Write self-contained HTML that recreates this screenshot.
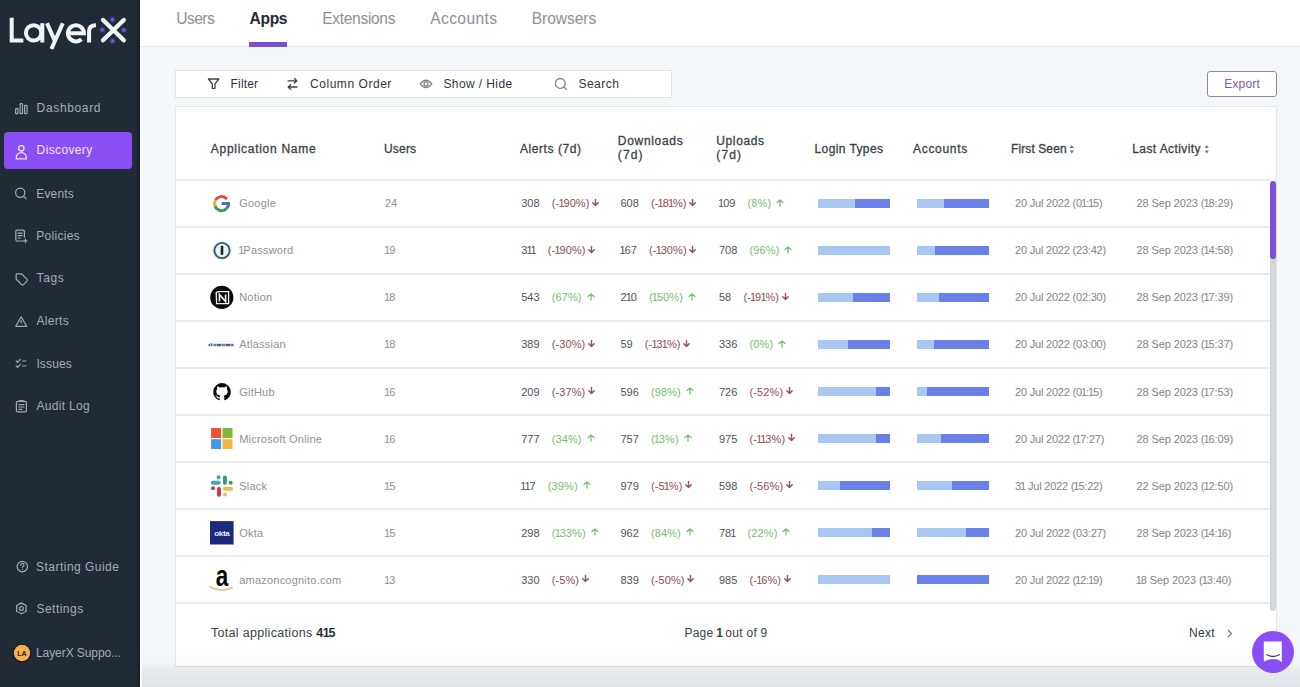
<!DOCTYPE html><html><head><meta charset="utf-8"><style>
*{box-sizing:border-box;margin:0;padding:0}
html,body{width:1300px;height:687px;overflow:hidden;background:#f4f7fa;font-family:"Liberation Sans",sans-serif}
.a{position:absolute;white-space:nowrap;line-height:1}
.ico{position:absolute}
#side{position:absolute;left:0;top:0;width:140px;height:687px;background:#202b35}
#hdr{position:absolute;left:140px;top:0;width:1160px;height:47px;background:#fff;border-bottom:1px solid #e6e9ec}
#tb{position:absolute;left:175px;top:70px;width:497px;height:28px;background:#fff;border:1px solid #e0e4e8}
#exp{position:absolute;left:1207px;top:71px;width:70px;height:26px;border:1.4px solid #8f8698;border-radius:3px;background:#fff}
#card{position:absolute;left:175px;top:106px;width:1102px;height:561px;background:#fff;border:1px solid #e2e5e9}
.rb{position:absolute;left:176px;width:1094px;height:2px;background:#eaecee}
.bar{position:absolute;height:9px;width:72px;background:#6b7fe9}
.bar i{position:absolute;left:0;top:0;height:9px;background:#a9c7f0}
</style></head><body><div id="side"></div>
<div class="a" style="left:137px;top:0;width:3px;height:687px;background:#1a232b"></div>
<div class="a" style="left:4px;top:132px;width:128px;height:37px;background:#8a4ff4;border-radius:4px;box-shadow:0.5px 1px 0 #2c2658"></div>
<div class="a" style="left:140px;top:0;width:2px;height:687px;background:#fafcfe"></div>
<svg class="ico" style="left:0;top:0" width="140" height="60" viewBox="0 0 140 60">
<defs><radialGradient id="dg"><stop offset="0" stop-color="#7a6ad8"/><stop offset="0.55" stop-color="#4f44a8"/><stop offset="1" stop-color="#2a2f5a" stop-opacity="0"/></radialGradient></defs>
<g fill="url(#dg)"><circle cx="112.5" cy="19.6" r="3.6"/><circle cx="102.3" cy="30" r="3.6"/><circle cx="123.8" cy="30" r="3.6"/><circle cx="112.5" cy="41" r="3.6"/></g>
<g fill="none" stroke="#f2f4f7" stroke-width="4" stroke-linecap="butt">
<path d="M11.7 17.8 V40.5 H23.4"/>
<circle cx="33.6" cy="32.85" r="7.7"/>
<path d="M42.3 23.2 V42.5"/>
<path d="M47 23.2 L55.2 41.6 M62.8 23.2 L51.4 49"/>
<path d="M67.8 33.2 H83.9 A8 8 0 1 0 81.4 39.2"/>
<path d="M89.1 42.5 V31.5 Q89.1 25.2 96 25.2"/>
</g>
<g stroke="#f2f4f7" stroke-width="4.4" stroke-linecap="round"><path d="M103 20 L123.8 40.3 M123.8 20 L103 40.3"/></g>
</svg>

<svg class="ico" style="left:0;top:0" width="140" height="687" viewBox="0 0 140 687">
<g fill="none" stroke="#a3aab2" stroke-width="1.2" stroke-linecap="round" stroke-linejoin="round">
<rect x="15.6" y="108.6" width="2.4" height="5" rx="0.6"/>
<rect x="20.1" y="103.6" width="2.4" height="10" rx="0.6"/>
<rect x="24.6" y="105.4" width="2.4" height="8.2" rx="0.6"/>
<circle cx="20.2" cy="192.8" r="4.6"/><path d="M23.6 196.2 L26.2 198.8"/>
<path d="M22.8 241 H17.2 a1.4 1.4 0 0 1 -1.4 -1.4 V231.6 a1.4 1.4 0 0 1 1.4 -1.4 H23 a1.4 1.4 0 0 1 1.4 1.4 V237.2"/>
<path d="M18 233.2 H22.2 M18 235.6 H22.2 M18 238 H20.4 M25.4 239.2 V242.6 M23.7 240.9 H27.1"/>
<path d="M16.2 274.6 L16.2 279.3 L21.8 284.8 Q22.5 285.4 23.2 284.8 L27.2 280.8 Q27.8 280.1 27.2 279.4 L21.6 273.8 L17 273.8 Q16.2 273.8 16.2 274.6 Z"/>
<path d="M21.2 316.8 L26.6 326.3 H15.8 Z"/><path d="M21.2 320.6 V323"/>
<path d="M16.2 361 L17.6 362.4 L20.3 359.4 M16.2 366 L17.6 367.4 L20.3 364.4 M22.6 361 H26 M22.6 366 H26"/>
<rect x="16.4" y="401.4" width="10" height="10.4" rx="1.2"/><path d="M19.6 400.6 H23.2 M18.8 404.6 H24 M18.8 407 H24 M18.8 409.4 H22"/>
<circle cx="22.3" cy="566.6" r="5.2"/><path d="M20.6 565.2 Q20.8 563.3 22.4 563.4 Q24.1 563.6 23.9 565.1 Q23.6 566.2 22.4 566.8 V567.6"/><path d="M22.4 569.6 V569.7"/>
<path d="M21.4 602.9 Q22.4 603.4 26.2 605.6 Q25.8 608.4 26.2 611.2 Q23 612.6 21.4 613.9 Q19.8 612.6 16.6 611.2 Q17 608.4 16.6 605.6 Q20.4 603.4 21.4 602.9 Z"/><circle cx="21.4" cy="608.4" r="1.9"/>
</g>
<g fill="none" stroke="#f3ddff" stroke-width="1.3"><circle cx="21.3" cy="148.3" r="2.7"/><path d="M16.3 158.8 Q16.2 152.6 21.3 152.6 Q26.4 152.6 26.3 158.8 Z"/></g>
<circle cx="22" cy="653" r="9.6" fill="#15110d" opacity="0.6"/><circle cx="22" cy="653" r="8.2" fill="#f2ae58"/>
<text x="22" y="655.6" font-size="7" font-weight="bold" font-family="Liberation Sans" fill="#3a2408" text-anchor="middle">LA</text>
</svg>
<div class="a" style="left:36.6px;top:101.64px;font-size:12px;letter-spacing:0.653px;color:#a6adb4">Dashboard</div>
<div class="a" style="left:36.6px;top:144.44px;font-size:12px;letter-spacing:0.368px;color:#f6e3ff">Discovery</div>
<div class="a" style="left:36.3px;top:187.64px;font-size:12px;letter-spacing:0.152px;color:#a6adb4">Events</div>
<div class="a" style="left:36.3px;top:230.04px;font-size:12px;letter-spacing:0.280px;color:#a6adb4">Policies</div>
<div class="a" style="left:36.5px;top:271.94px;font-size:12px;letter-spacing:0.635px;color:#a6adb4">Tags</div>
<div class="a" style="left:36.4px;top:315.24px;font-size:12px;letter-spacing:0.335px;color:#a6adb4">Alerts</div>
<div class="a" style="left:36.4px;top:357.64px;font-size:12px;letter-spacing:0.135px;color:#a6adb4">Issues</div>
<div class="a" style="left:36.4px;top:400.04px;font-size:12px;letter-spacing:0.309px;color:#a6adb4">Audit Log</div>
<div class="a" style="left:36.1px;top:560.54px;font-size:12px;letter-spacing:0.463px;color:#a6adb4">Starting Guide</div>
<div class="a" style="left:36.5px;top:603.24px;font-size:12px;letter-spacing:0.468px;color:#a6adb4">Settings</div>
<div class="a" style="left:36px;top:647.34px;font-size:12px;letter-spacing:-0.077px;color:#a6adb4">LayerX Suppo...</div>
<div id="hdr"></div>
<div class="a" style="left:176.2px;top:10.59px;font-size:15.6px;letter-spacing:-0.547px;color:#8b9096">Users</div>
<div class="a" style="left:249.6px;top:10.59px;font-size:15.6px;letter-spacing:-0.371px;font-weight:bold;color:#262b31">Apps</div>
<div class="a" style="left:322.2px;top:10.59px;font-size:15.6px;letter-spacing:-0.328px;color:#8b9096">Extensions</div>
<div class="a" style="left:430.3px;top:10.59px;font-size:15.6px;letter-spacing:0.355px;color:#8b9096">Accounts</div>
<div class="a" style="left:531.8px;top:10.59px;font-size:15.6px;letter-spacing:-0.087px;color:#8b9096">Browsers</div>
<div class="a" style="left:249px;top:42px;width:38px;height:5px;background:#7a4fd6"></div>
<div id="tb"></div>
<div class="a" style="left:230.6px;top:77.84px;font-size:12px;letter-spacing:0.171px;color:#30363c">Filter</div>
<div class="a" style="left:310px;top:77.84px;font-size:12px;letter-spacing:0.545px;color:#30363c">Column Order</div>
<div class="a" style="left:443.4px;top:77.84px;font-size:12px;letter-spacing:0.409px;color:#30363c">Show / Hide</div>
<div class="a" style="left:578.4px;top:77.84px;font-size:12px;letter-spacing:0.495px;color:#30363c">Search</div>
<svg class="ico" style="left:0;top:0" width="700" height="110" viewBox="0 0 700 110">
<g fill="none" stroke="#3d4248" stroke-width="1.3" stroke-linejoin="round" stroke-linecap="round">
<path d="M208.4 79 H218.8 L215 83.8 V88.3 L212.3 88.3 V83.8 Z"/>
<path d="M288 80.8 H296.4 M294.4 78.6 L296.8 80.8 L294.4 83 M297 87 H288.6 M290.6 84.8 L288.2 87 L290.6 89.2"/>
</g>
<g fill="none" stroke="#7f8388" stroke-width="1.3">
<path d="M420.2 83.9 Q426 76.6 431.8 83.9 Q426 91.2 420.2 83.9 Z"/><circle cx="426" cy="83.9" r="2"/>
<circle cx="560.3" cy="83.4" r="4.9"/><path d="M563.8 86.9 L566.4 89.3" stroke-linecap="round"/>
</g>
</svg>
<div id="exp"></div>
<div class="a" style="left:1224.3px;top:77.74px;font-size:12px;letter-spacing:0.152px;color:#7a5cb0">Export</div>
<div id="card"></div>
<div class="a" style="left:210.8px;top:142.54px;font-size:12px;letter-spacing:0.715px;color:#3a3f45;-webkit-text-stroke:0.3px #3a3f45">Application Name</div>
<div class="a" style="left:384px;top:142.54px;font-size:12px;letter-spacing:0.191px;color:#3a3f45;-webkit-text-stroke:0.3px #3a3f45">Users</div>
<div class="a" style="left:520px;top:142.54px;font-size:12px;letter-spacing:0.558px;color:#3a3f45;-webkit-text-stroke:0.3px #3a3f45">Alerts (7d)</div>
<div class="a" style="left:814.5px;top:142.54px;font-size:12px;letter-spacing:0.400px;color:#3a3f45;-webkit-text-stroke:0.3px #3a3f45">Login Types</div>
<div class="a" style="left:913px;top:142.54px;font-size:12px;letter-spacing:0.693px;color:#3a3f45;-webkit-text-stroke:0.3px #3a3f45">Accounts</div>
<div class="a" style="left:1011px;top:142.54px;font-size:12px;letter-spacing:0.101px;color:#3a3f45;-webkit-text-stroke:0.3px #3a3f45">First Seen</div>
<div class="a" style="left:1132.3px;top:142.54px;font-size:12px;letter-spacing:0.403px;color:#3a3f45;-webkit-text-stroke:0.3px #3a3f45">Last Activity</div>
<div class="a" style="left:617.8px;top:135.44px;font-size:12px;letter-spacing:0.692px;color:#3a3f45;-webkit-text-stroke:0.3px #3a3f45">Downloads</div>
<div class="a" style="left:617.8px;top:149.34px;font-size:12px;letter-spacing:1.139px;color:#3a3f45;-webkit-text-stroke:0.3px #3a3f45">(7d)</div>
<div class="a" style="left:716.3px;top:135.44px;font-size:12px;letter-spacing:0.610px;color:#3a3f45;-webkit-text-stroke:0.3px #3a3f45">Uploads</div>
<div class="a" style="left:716.3px;top:149.34px;font-size:12px;letter-spacing:1.139px;color:#3a3f45;-webkit-text-stroke:0.3px #3a3f45">(7d)</div>
<div class="rb" style="top:179px"></div>
<div class="a" style="left:239.2px;top:198.39px;font-size:11px;letter-spacing:0.220px;color:#8c9196">Google</div>
<div class="a" style="left:385px;top:198.39px;font-size:11px;color:#8c9196">24</div>
<div id="cn0" class="a" style="left:521.2px;top:198.39px;font-size:11px;color:#4e5358">308</div><div class="a" style="left:551.76px;top:198.39px;font-size:11px;letter-spacing:0.1px;color:#914c51">(-<span style="margin-left:-0.9px;letter-spacing:-1.1px">1</span>90%)</div><svg width="7" height="9" viewBox="0 0 7 9" style="position:absolute;left:592.13px;top:198.10px"><path d="M3.5 1.4 V7.6 M0.8 4.8 L3.5 7.6 L6.2 4.8" fill="none" stroke="#94555a" stroke-width="1.45" stroke-linecap="round" stroke-linejoin="round"/></svg>
<div id="cn1" class="a" style="left:620.4px;top:198.39px;font-size:11px;color:#4e5358">608</div><div class="a" style="left:650.96px;top:198.39px;font-size:11px;letter-spacing:0.1px;color:#914c51">(-<span style="margin-left:-0.9px;letter-spacing:-1.1px">1</span>8<span style="margin-left:-0.9px;letter-spacing:-1.1px">1</span>%)</div><svg width="7" height="9" viewBox="0 0 7 9" style="position:absolute;left:689.25px;top:198.10px"><path d="M3.5 1.4 V7.6 M0.8 4.8 L3.5 7.6 L6.2 4.8" fill="none" stroke="#94555a" stroke-width="1.45" stroke-linecap="round" stroke-linejoin="round"/></svg>
<div id="cn2" class="a" style="left:719px;top:198.39px;font-size:11px;color:#4e5358"><span style="margin-left:-0.9px;letter-spacing:-1.1px">1</span>09</div><div class="a" style="left:747.59px;top:198.39px;font-size:11px;letter-spacing:0.1px;color:#76bd74">(8%)</div><svg width="8" height="8" viewBox="0 0 8 8" style="position:absolute;left:776.22px;top:199.10px"><path d="M4 7 V0.9 M1 3.6 L4 0.9 L7 3.6" fill="none" stroke="#7cbd7a" stroke-width="1.3" stroke-linecap="round" stroke-linejoin="round"/></svg>
<div class="bar" style="left:818px;top:199px"><i style="width:51%"></i></div>
<div class="bar" style="left:917px;top:199px"><i style="width:37%"></i></div>
<div class="a" style="left:1015px;top:198.39px;font-size:11px;letter-spacing:-0.200px;color:#80858a">20 Jul 2022 (0<span style="margin-left:-0.9px;letter-spacing:-1.1px">1</span>:<span style="margin-left:-0.9px;letter-spacing:-1.1px">1</span>5)</div>
<div class="a" style="left:1136.6px;top:198.39px;font-size:11px;letter-spacing:-0.100px;color:#80858a">28 Sep 2023 (<span style="margin-left:-0.9px;letter-spacing:-1.1px">1</span>8:29)</div>
<div class="rb" style="top:226px"></div>
<div class="a" style="left:239.2px;top:245.42px;font-size:11px;letter-spacing:0.220px;color:#8c9196"><span style="margin-left:-0.9px;letter-spacing:-1.1px">1</span>Password</div>
<div class="a" style="left:385px;top:245.42px;font-size:11px;color:#8c9196"><span style="margin-left:-0.9px;letter-spacing:-1.1px">1</span>9</div>
<div id="cn3" class="a" style="left:521.2px;top:245.42px;font-size:11px;color:#4e5358">3<span style="margin-left:-0.9px;letter-spacing:-1.1px">1</span><span style="margin-left:-0.9px;letter-spacing:-1.1px">1</span></div><div class="a" style="left:547.81px;top:245.42px;font-size:11px;letter-spacing:0.1px;color:#914c51">(-<span style="margin-left:-0.9px;letter-spacing:-1.1px">1</span>90%)</div><svg width="7" height="9" viewBox="0 0 7 9" style="position:absolute;left:588.17px;top:245.13px"><path d="M3.5 1.4 V7.6 M0.8 4.8 L3.5 7.6 L6.2 4.8" fill="none" stroke="#94555a" stroke-width="1.45" stroke-linecap="round" stroke-linejoin="round"/></svg>
<div id="cn4" class="a" style="left:620.4px;top:245.42px;font-size:11px;color:#4e5358"><span style="margin-left:-0.9px;letter-spacing:-1.1px">1</span>67</div><div class="a" style="left:648.99px;top:245.42px;font-size:11px;letter-spacing:0.1px;color:#914c51">(-<span style="margin-left:-0.9px;letter-spacing:-1.1px">1</span>30%)</div><svg width="7" height="9" viewBox="0 0 7 9" style="position:absolute;left:689.36px;top:245.13px"><path d="M3.5 1.4 V7.6 M0.8 4.8 L3.5 7.6 L6.2 4.8" fill="none" stroke="#94555a" stroke-width="1.45" stroke-linecap="round" stroke-linejoin="round"/></svg>
<div id="cn5" class="a" style="left:719px;top:245.42px;font-size:11px;color:#4e5358">708</div><div class="a" style="left:749.56px;top:245.42px;font-size:11px;letter-spacing:0.1px;color:#76bd74">(96%)</div><svg width="8" height="8" viewBox="0 0 8 8" style="position:absolute;left:784.40px;top:246.13px"><path d="M4 7 V0.9 M1 3.6 L4 0.9 L7 3.6" fill="none" stroke="#7cbd7a" stroke-width="1.3" stroke-linecap="round" stroke-linejoin="round"/></svg>
<div class="bar" style="left:818px;top:246px"><i style="width:100%"></i></div>
<div class="bar" style="left:917px;top:246px"><i style="width:25%"></i></div>
<div class="a" style="left:1015px;top:245.42px;font-size:11px;letter-spacing:-0.200px;color:#80858a">20 Jul 2022 (23:42)</div>
<div class="a" style="left:1136.6px;top:245.42px;font-size:11px;letter-spacing:-0.100px;color:#80858a">28 Sep 2023 (<span style="margin-left:-0.9px;letter-spacing:-1.1px">1</span>4:58)</div>
<div class="rb" style="top:273px"></div>
<div class="a" style="left:239.2px;top:292.45px;font-size:11px;letter-spacing:0.220px;color:#8c9196">Notion</div>
<div class="a" style="left:385px;top:292.45px;font-size:11px;color:#8c9196"><span style="margin-left:-0.9px;letter-spacing:-1.1px">1</span>8</div>
<div id="cn6" class="a" style="left:521.2px;top:292.45px;font-size:11px;color:#4e5358">543</div><div class="a" style="left:551.76px;top:292.45px;font-size:11px;letter-spacing:0.1px;color:#76bd74">(67%)</div><svg width="8" height="8" viewBox="0 0 8 8" style="position:absolute;left:586.60px;top:293.16px"><path d="M4 7 V0.9 M1 3.6 L4 0.9 L7 3.6" fill="none" stroke="#7cbd7a" stroke-width="1.3" stroke-linecap="round" stroke-linejoin="round"/></svg>
<div id="cn7" class="a" style="left:620.4px;top:292.45px;font-size:11px;color:#4e5358">2<span style="margin-left:-0.9px;letter-spacing:-1.1px">1</span>0</div><div class="a" style="left:648.99px;top:292.45px;font-size:11px;letter-spacing:0.1px;color:#76bd74">(<span style="margin-left:-0.9px;letter-spacing:-1.1px">1</span>50%)</div><svg width="8" height="8" viewBox="0 0 8 8" style="position:absolute;left:687.99px;top:293.16px"><path d="M4 7 V0.9 M1 3.6 L4 0.9 L7 3.6" fill="none" stroke="#7cbd7a" stroke-width="1.3" stroke-linecap="round" stroke-linejoin="round"/></svg>
<div id="cn8" class="a" style="left:719px;top:292.45px;font-size:11px;color:#4e5358">58</div><div class="a" style="left:743.45px;top:292.45px;font-size:11px;letter-spacing:0.1px;color:#914c51">(-<span style="margin-left:-0.9px;letter-spacing:-1.1px">1</span>9<span style="margin-left:-0.9px;letter-spacing:-1.1px">1</span>%)</div><svg width="7" height="9" viewBox="0 0 7 9" style="position:absolute;left:781.74px;top:292.16px"><path d="M3.5 1.4 V7.6 M0.8 4.8 L3.5 7.6 L6.2 4.8" fill="none" stroke="#94555a" stroke-width="1.45" stroke-linecap="round" stroke-linejoin="round"/></svg>
<div class="bar" style="left:818px;top:293px"><i style="width:49%"></i></div>
<div class="bar" style="left:917px;top:293px"><i style="width:30%"></i></div>
<div class="a" style="left:1015px;top:292.45px;font-size:11px;letter-spacing:-0.200px;color:#80858a">20 Jul 2022 (02:30)</div>
<div class="a" style="left:1136.6px;top:292.45px;font-size:11px;letter-spacing:-0.100px;color:#80858a">28 Sep 2023 (<span style="margin-left:-0.9px;letter-spacing:-1.1px">1</span>7:39)</div>
<div class="rb" style="top:320px"></div>
<div class="a" style="left:239.2px;top:339.48px;font-size:11px;letter-spacing:0.220px;color:#8c9196">Atlassian</div>
<div class="a" style="left:385px;top:339.48px;font-size:11px;color:#8c9196"><span style="margin-left:-0.9px;letter-spacing:-1.1px">1</span>8</div>
<div id="cn9" class="a" style="left:521.2px;top:339.48px;font-size:11px;color:#4e5358">389</div><div class="a" style="left:551.76px;top:339.48px;font-size:11px;letter-spacing:0.1px;color:#914c51">(-30%)</div><svg width="7" height="9" viewBox="0 0 7 9" style="position:absolute;left:587.97px;top:339.19px"><path d="M3.5 1.4 V7.6 M0.8 4.8 L3.5 7.6 L6.2 4.8" fill="none" stroke="#94555a" stroke-width="1.45" stroke-linecap="round" stroke-linejoin="round"/></svg>
<div id="cn10" class="a" style="left:620.4px;top:339.48px;font-size:11px;color:#4e5358">59</div><div class="a" style="left:644.85px;top:339.48px;font-size:11px;letter-spacing:0.1px;color:#914c51">(-<span style="margin-left:-0.9px;letter-spacing:-1.1px">1</span>3<span style="margin-left:-0.9px;letter-spacing:-1.1px">1</span>%)</div><svg width="7" height="9" viewBox="0 0 7 9" style="position:absolute;left:683.14px;top:339.19px"><path d="M3.5 1.4 V7.6 M0.8 4.8 L3.5 7.6 L6.2 4.8" fill="none" stroke="#94555a" stroke-width="1.45" stroke-linecap="round" stroke-linejoin="round"/></svg>
<div id="cn11" class="a" style="left:719px;top:339.48px;font-size:11px;color:#4e5358">336</div><div class="a" style="left:749.56px;top:339.48px;font-size:11px;letter-spacing:0.1px;color:#76bd74">(0%)</div><svg width="8" height="8" viewBox="0 0 8 8" style="position:absolute;left:778.18px;top:340.19px"><path d="M4 7 V0.9 M1 3.6 L4 0.9 L7 3.6" fill="none" stroke="#7cbd7a" stroke-width="1.3" stroke-linecap="round" stroke-linejoin="round"/></svg>
<div class="bar" style="left:818px;top:340px"><i style="width:42%"></i></div>
<div class="bar" style="left:917px;top:340px"><i style="width:24%"></i></div>
<div class="a" style="left:1015px;top:339.48px;font-size:11px;letter-spacing:-0.200px;color:#80858a">20 Jul 2022 (03:00)</div>
<div class="a" style="left:1136.6px;top:339.48px;font-size:11px;letter-spacing:-0.100px;color:#80858a">28 Sep 2023 (<span style="margin-left:-0.9px;letter-spacing:-1.1px">1</span>5:37)</div>
<div class="rb" style="top:367px"></div>
<div class="a" style="left:239.2px;top:386.51px;font-size:11px;letter-spacing:0.220px;color:#8c9196">GitHub</div>
<div class="a" style="left:385px;top:386.51px;font-size:11px;color:#8c9196"><span style="margin-left:-0.9px;letter-spacing:-1.1px">1</span>6</div>
<div id="cn12" class="a" style="left:521.2px;top:386.51px;font-size:11px;color:#4e5358">209</div><div class="a" style="left:551.76px;top:386.51px;font-size:11px;letter-spacing:0.1px;color:#914c51">(-37%)</div><svg width="7" height="9" viewBox="0 0 7 9" style="position:absolute;left:587.97px;top:386.22px"><path d="M3.5 1.4 V7.6 M0.8 4.8 L3.5 7.6 L6.2 4.8" fill="none" stroke="#94555a" stroke-width="1.45" stroke-linecap="round" stroke-linejoin="round"/></svg>
<div id="cn13" class="a" style="left:620.4px;top:386.51px;font-size:11px;color:#4e5358">596</div><div class="a" style="left:650.96px;top:386.51px;font-size:11px;letter-spacing:0.1px;color:#76bd74">(98%)</div><svg width="8" height="8" viewBox="0 0 8 8" style="position:absolute;left:685.80px;top:387.22px"><path d="M4 7 V0.9 M1 3.6 L4 0.9 L7 3.6" fill="none" stroke="#7cbd7a" stroke-width="1.3" stroke-linecap="round" stroke-linejoin="round"/></svg>
<div id="cn14" class="a" style="left:719px;top:386.51px;font-size:11px;color:#4e5358">726</div><div class="a" style="left:749.56px;top:386.51px;font-size:11px;letter-spacing:0.1px;color:#914c51">(-52%)</div><svg width="7" height="9" viewBox="0 0 7 9" style="position:absolute;left:785.77px;top:386.22px"><path d="M3.5 1.4 V7.6 M0.8 4.8 L3.5 7.6 L6.2 4.8" fill="none" stroke="#94555a" stroke-width="1.45" stroke-linecap="round" stroke-linejoin="round"/></svg>
<div class="bar" style="left:818px;top:387px"><i style="width:80%"></i></div>
<div class="bar" style="left:917px;top:387px"><i style="width:14%"></i></div>
<div class="a" style="left:1015px;top:386.51px;font-size:11px;letter-spacing:-0.200px;color:#80858a">20 Jul 2022 (0<span style="margin-left:-0.9px;letter-spacing:-1.1px">1</span>:<span style="margin-left:-0.9px;letter-spacing:-1.1px">1</span>5)</div>
<div class="a" style="left:1136.6px;top:386.51px;font-size:11px;letter-spacing:-0.100px;color:#80858a">28 Sep 2023 (<span style="margin-left:-0.9px;letter-spacing:-1.1px">1</span>7:53)</div>
<div class="rb" style="top:414px"></div>
<div class="a" style="left:239.2px;top:433.54px;font-size:11px;letter-spacing:0.220px;color:#8c9196">Microsoft Online</div>
<div class="a" style="left:385px;top:433.54px;font-size:11px;color:#8c9196"><span style="margin-left:-0.9px;letter-spacing:-1.1px">1</span>6</div>
<div id="cn15" class="a" style="left:521.2px;top:433.54px;font-size:11px;color:#4e5358">777</div><div class="a" style="left:551.76px;top:433.54px;font-size:11px;letter-spacing:0.1px;color:#76bd74">(34%)</div><svg width="8" height="8" viewBox="0 0 8 8" style="position:absolute;left:586.60px;top:434.25px"><path d="M4 7 V0.9 M1 3.6 L4 0.9 L7 3.6" fill="none" stroke="#7cbd7a" stroke-width="1.3" stroke-linecap="round" stroke-linejoin="round"/></svg>
<div id="cn16" class="a" style="left:620.4px;top:433.54px;font-size:11px;color:#4e5358">757</div><div class="a" style="left:650.96px;top:433.54px;font-size:11px;letter-spacing:0.1px;color:#76bd74">(<span style="margin-left:-0.9px;letter-spacing:-1.1px">1</span>3%)</div><svg width="8" height="8" viewBox="0 0 8 8" style="position:absolute;left:683.74px;top:434.25px"><path d="M4 7 V0.9 M1 3.6 L4 0.9 L7 3.6" fill="none" stroke="#7cbd7a" stroke-width="1.3" stroke-linecap="round" stroke-linejoin="round"/></svg>
<div id="cn17" class="a" style="left:719px;top:433.54px;font-size:11px;color:#4e5358">975</div><div class="a" style="left:749.56px;top:433.54px;font-size:11px;letter-spacing:0.1px;color:#914c51">(-<span style="margin-left:-0.9px;letter-spacing:-1.1px">1</span><span style="margin-left:-0.9px;letter-spacing:-1.1px">1</span>3%)</div><svg width="7" height="9" viewBox="0 0 7 9" style="position:absolute;left:787.85px;top:433.25px"><path d="M3.5 1.4 V7.6 M0.8 4.8 L3.5 7.6 L6.2 4.8" fill="none" stroke="#94555a" stroke-width="1.45" stroke-linecap="round" stroke-linejoin="round"/></svg>
<div class="bar" style="left:818px;top:434px"><i style="width:80%"></i></div>
<div class="bar" style="left:917px;top:434px"><i style="width:33%"></i></div>
<div class="a" style="left:1015px;top:433.54px;font-size:11px;letter-spacing:-0.200px;color:#80858a">20 Jul 2022 (<span style="margin-left:-0.9px;letter-spacing:-1.1px">1</span>7:27)</div>
<div class="a" style="left:1136.6px;top:433.54px;font-size:11px;letter-spacing:-0.100px;color:#80858a">28 Sep 2023 (<span style="margin-left:-0.9px;letter-spacing:-1.1px">1</span>6:09)</div>
<div class="rb" style="top:461px"></div>
<div class="a" style="left:239.2px;top:480.57px;font-size:11px;letter-spacing:0.220px;color:#8c9196">Slack</div>
<div class="a" style="left:385px;top:480.57px;font-size:11px;color:#8c9196"><span style="margin-left:-0.9px;letter-spacing:-1.1px">1</span>5</div>
<div id="cn18" class="a" style="left:521.2px;top:480.57px;font-size:11px;color:#4e5358"><span style="margin-left:-0.9px;letter-spacing:-1.1px">1</span><span style="margin-left:-0.9px;letter-spacing:-1.1px">1</span>7</div><div class="a" style="left:547.81px;top:480.57px;font-size:11px;letter-spacing:0.1px;color:#76bd74">(39%)</div><svg width="8" height="8" viewBox="0 0 8 8" style="position:absolute;left:582.65px;top:481.28px"><path d="M4 7 V0.9 M1 3.6 L4 0.9 L7 3.6" fill="none" stroke="#7cbd7a" stroke-width="1.3" stroke-linecap="round" stroke-linejoin="round"/></svg>
<div id="cn19" class="a" style="left:620.4px;top:480.57px;font-size:11px;color:#4e5358">979</div><div class="a" style="left:650.96px;top:480.57px;font-size:11px;letter-spacing:0.1px;color:#914c51">(-5<span style="margin-left:-0.9px;letter-spacing:-1.1px">1</span>%)</div><svg width="7" height="9" viewBox="0 0 7 9" style="position:absolute;left:685.11px;top:480.28px"><path d="M3.5 1.4 V7.6 M0.8 4.8 L3.5 7.6 L6.2 4.8" fill="none" stroke="#94555a" stroke-width="1.45" stroke-linecap="round" stroke-linejoin="round"/></svg>
<div id="cn20" class="a" style="left:719px;top:480.57px;font-size:11px;color:#4e5358">598</div><div class="a" style="left:749.56px;top:480.57px;font-size:11px;letter-spacing:0.1px;color:#914c51">(-56%)</div><svg width="7" height="9" viewBox="0 0 7 9" style="position:absolute;left:785.77px;top:480.28px"><path d="M3.5 1.4 V7.6 M0.8 4.8 L3.5 7.6 L6.2 4.8" fill="none" stroke="#94555a" stroke-width="1.45" stroke-linecap="round" stroke-linejoin="round"/></svg>
<div class="bar" style="left:818px;top:481px"><i style="width:30%"></i></div>
<div class="bar" style="left:917px;top:481px"><i style="width:49%"></i></div>
<div class="a" style="left:1015px;top:480.57px;font-size:11px;letter-spacing:-0.200px;color:#80858a">3<span style="margin-left:-0.9px;letter-spacing:-1.1px">1</span> Jul 2022 (<span style="margin-left:-0.9px;letter-spacing:-1.1px">1</span>5:22)</div>
<div class="a" style="left:1136.6px;top:480.57px;font-size:11px;letter-spacing:-0.100px;color:#80858a">22 Sep 2023 (<span style="margin-left:-0.9px;letter-spacing:-1.1px">1</span>2:50)</div>
<div class="rb" style="top:508px"></div>
<div class="a" style="left:239.2px;top:527.6px;font-size:11px;letter-spacing:0.220px;color:#8c9196">Okta</div>
<div class="a" style="left:385px;top:527.6px;font-size:11px;color:#8c9196"><span style="margin-left:-0.9px;letter-spacing:-1.1px">1</span>5</div>
<div id="cn21" class="a" style="left:521.2px;top:527.6px;font-size:11px;color:#4e5358">298</div><div class="a" style="left:551.76px;top:527.6px;font-size:11px;letter-spacing:0.1px;color:#76bd74">(<span style="margin-left:-0.9px;letter-spacing:-1.1px">1</span>33%)</div><svg width="8" height="8" viewBox="0 0 8 8" style="position:absolute;left:590.76px;top:528.31px"><path d="M4 7 V0.9 M1 3.6 L4 0.9 L7 3.6" fill="none" stroke="#7cbd7a" stroke-width="1.3" stroke-linecap="round" stroke-linejoin="round"/></svg>
<div id="cn22" class="a" style="left:620.4px;top:527.6px;font-size:11px;color:#4e5358">962</div><div class="a" style="left:650.96px;top:527.6px;font-size:11px;letter-spacing:0.1px;color:#76bd74">(84%)</div><svg width="8" height="8" viewBox="0 0 8 8" style="position:absolute;left:685.80px;top:528.31px"><path d="M4 7 V0.9 M1 3.6 L4 0.9 L7 3.6" fill="none" stroke="#7cbd7a" stroke-width="1.3" stroke-linecap="round" stroke-linejoin="round"/></svg>
<div id="cn23" class="a" style="left:719px;top:527.6px;font-size:11px;color:#4e5358">78<span style="margin-left:-0.9px;letter-spacing:-1.1px">1</span></div><div class="a" style="left:747.59px;top:527.6px;font-size:11px;letter-spacing:0.1px;color:#76bd74">(22%)</div><svg width="8" height="8" viewBox="0 0 8 8" style="position:absolute;left:782.43px;top:528.31px"><path d="M4 7 V0.9 M1 3.6 L4 0.9 L7 3.6" fill="none" stroke="#7cbd7a" stroke-width="1.3" stroke-linecap="round" stroke-linejoin="round"/></svg>
<div class="bar" style="left:818px;top:528px"><i style="width:75%"></i></div>
<div class="bar" style="left:917px;top:528px"><i style="width:68%"></i></div>
<div class="a" style="left:1015px;top:527.6px;font-size:11px;letter-spacing:-0.200px;color:#80858a">20 Jul 2022 (03:27)</div>
<div class="a" style="left:1136.6px;top:527.6px;font-size:11px;letter-spacing:-0.100px;color:#80858a">28 Sep 2023 (<span style="margin-left:-0.9px;letter-spacing:-1.1px">1</span>4:<span style="margin-left:-0.9px;letter-spacing:-1.1px">1</span>6)</div>
<div class="rb" style="top:555px"></div>
<div class="a" style="left:239.2px;top:574.63px;font-size:11px;letter-spacing:0.220px;color:#8c9196">amazoncognito.com</div>
<div class="a" style="left:385px;top:574.63px;font-size:11px;color:#8c9196"><span style="margin-left:-0.9px;letter-spacing:-1.1px">1</span>3</div>
<div id="cn24" class="a" style="left:521.2px;top:574.63px;font-size:11px;color:#4e5358">330</div><div class="a" style="left:551.76px;top:574.63px;font-size:11px;letter-spacing:0.1px;color:#914c51">(-5%)</div><svg width="7" height="9" viewBox="0 0 7 9" style="position:absolute;left:581.75px;top:574.34px"><path d="M3.5 1.4 V7.6 M0.8 4.8 L3.5 7.6 L6.2 4.8" fill="none" stroke="#94555a" stroke-width="1.45" stroke-linecap="round" stroke-linejoin="round"/></svg>
<div id="cn25" class="a" style="left:620.4px;top:574.63px;font-size:11px;color:#4e5358">839</div><div class="a" style="left:650.96px;top:574.63px;font-size:11px;letter-spacing:0.1px;color:#914c51">(-50%)</div><svg width="7" height="9" viewBox="0 0 7 9" style="position:absolute;left:687.17px;top:574.34px"><path d="M3.5 1.4 V7.6 M0.8 4.8 L3.5 7.6 L6.2 4.8" fill="none" stroke="#94555a" stroke-width="1.45" stroke-linecap="round" stroke-linejoin="round"/></svg>
<div id="cn26" class="a" style="left:719px;top:574.63px;font-size:11px;color:#4e5358">985</div><div class="a" style="left:749.56px;top:574.63px;font-size:11px;letter-spacing:0.1px;color:#914c51">(-<span style="margin-left:-0.9px;letter-spacing:-1.1px">1</span>6%)</div><svg width="7" height="9" viewBox="0 0 7 9" style="position:absolute;left:783.71px;top:574.34px"><path d="M3.5 1.4 V7.6 M0.8 4.8 L3.5 7.6 L6.2 4.8" fill="none" stroke="#94555a" stroke-width="1.45" stroke-linecap="round" stroke-linejoin="round"/></svg>
<div class="bar" style="left:818px;top:575px"><i style="width:100%"></i></div>
<div class="bar" style="left:917px;top:575px"><i style="width:0%"></i></div>
<div class="a" style="left:1015px;top:574.63px;font-size:11px;letter-spacing:-0.200px;color:#80858a">20 Jul 2022 (<span style="margin-left:-0.9px;letter-spacing:-1.1px">1</span>2:<span style="margin-left:-0.9px;letter-spacing:-1.1px">1</span>9)</div>
<div class="a" style="left:1136.6px;top:574.63px;font-size:11px;letter-spacing:-0.100px;color:#80858a"><span style="margin-left:-0.9px;letter-spacing:-1.1px">1</span>8 Sep 2023 (<span style="margin-left:-0.9px;letter-spacing:-1.1px">1</span>3:40)</div>
<div class="rb" style="top:602px"></div>
<svg class="ico" style="left:0;top:0" width="260" height="620" viewBox="0 0 260 620">
<!-- Google -->
<g fill="none" stroke-width="3">
<path d="M215.54 200.1 A7 7 0 0 1 226.96 199.1" stroke="#d9503c"/>
<path d="M215.02 206.0 A7 7 0 0 1 215.54 200.1" stroke="#e5b33c"/>
<path d="M226.55 208.55 A7 7 0 0 1 215.02 206.0" stroke="#3e9a56"/>
<path d="M228.6 203.6 A7 7 0 0 1 226.55 208.55 M221.8 203.6 H230" stroke="#4a70b8"/>
</g>
<!-- 1Password -->
<circle cx="222" cy="250.5" r="10" fill="#e3f1f8"/>
<circle cx="222" cy="250.5" r="7.6" fill="#e6f5fa" stroke="#3a5664" stroke-width="1.9"/>
<rect x="220.7" y="245.8" width="2.6" height="9.2" rx="0.8" fill="#2b2226"/>
<!-- Notion -->
<circle cx="221.8" cy="297.4" r="11.6" fill="#0a0a0a"/>
<path d="M216.2 292.4 L218.2 291.6 H228.6 V303.6 H216.6 Z" fill="none" stroke="#f2f2f2" stroke-width="1.3"/>
<path d="M219.4 301.6 V294.4 L225.6 301.6 V294.4" fill="none" stroke="#f2f2f2" stroke-width="1.6"/>
<!-- Atlassian -->
<g fill="#3e4c72">
<rect x="208.4" y="344" width="1.6" height="2.2" opacity="0.8"/>
<rect x="210.6" y="343.4" width="1.8" height="2.8" fill="#2f5fc0"/>
<rect x="213.4" y="343.8" width="3" height="2.4" opacity="0.75"/>
<rect x="216.8" y="343.8" width="4.6" height="2.4" opacity="0.9"/>
<rect x="221.8" y="343.8" width="3.2" height="2.4" opacity="0.7"/>
<rect x="225.4" y="343.8" width="5" height="2.4" opacity="0.9"/>
<rect x="230.8" y="343.8" width="3" height="2.4" opacity="0.75"/>
</g>
<rect x="213" y="341.2" width="20" height="1" fill="#d6deec" opacity="0.5"/>
<!-- GitHub -->
<path fill="#0c0c0c" d="M222 383 a8.9 8.9 0 0 0 -2.8 17.3 c0.45 0.08 0.6 -0.2 0.6 -0.43 v-1.5 c-2.5 0.55 -3 -1.2 -3 -1.2 c-0.4 -1.05 -1 -1.32 -1 -1.32 c-0.82 -0.55 0.06 -0.54 0.06 -0.54 c0.9 0.06 1.37 0.92 1.37 0.92 c0.8 1.37 2.1 0.97 2.6 0.74 c0.08 -0.58 0.32 -0.97 0.57 -1.2 c-1.97 -0.22 -4.05 -0.99 -4.05 -4.4 c0 -0.97 0.35 -1.77 0.92 -2.39 c-0.1 -0.22 -0.4 -1.13 0.08 -2.36 c0 0 0.75 -0.24 2.45 0.92 a8.5 8.5 0 0 1 4.45 0 c1.7 -1.16 2.45 -0.92 2.45 -0.92 c0.49 1.23 0.18 2.14 0.09 2.36 c0.57 0.62 0.92 1.42 0.92 2.39 c0 3.42 -2.08 4.18 -4.06 4.4 c0.32 0.28 0.6 0.82 0.6 1.65 v2.45 c0 0.24 0.16 0.52 0.61 0.43 A8.9 8.9 0 0 0 222 383 z"/>
<!-- Microsoft -->
<rect x="211.1" y="428" width="10" height="10" fill="#e5562c"/>
<rect x="222.5" y="428" width="10" height="10" fill="#84b53c"/>
<rect x="211.1" y="439.2" width="10" height="9.8" fill="#3f9be6"/>
<rect x="222.5" y="439.2" width="10" height="9.8" fill="#f4b63a"/>
<!-- Slack -->
<g stroke-linecap="round" stroke-width="4" fill="none">
<path d="M212.8 482.8 H218.6 M218.6 477.3 V477.4" stroke="#4aa2c2"/>
<path d="M224.9 477.4 V482.8 M230.6 482.8 H230.7" stroke="#3a9a6c"/>
<path d="M213 488.2 H213.1 M219 489 V494.8" stroke="#c63a5a"/>
<path d="M225 488.8 H231 M225 494.4 V494.5" stroke="#e6bb58"/>
</g>
<!-- Okta -->
<rect x="210" y="521.1" width="23.6" height="23.4" fill="#1b2a7a"/>
<text x="221.8" y="535.8" font-size="8" font-weight="bold" font-family="Liberation Sans" fill="#e8ecff" text-anchor="middle" letter-spacing="-0.3">okta</text>
<!-- Amazon -->
<text x="222" y="585.8" font-size="22" font-weight="bold" font-family="Liberation Sans" fill="#050505" text-anchor="middle" transform="translate(222 585.8) scale(1.02 1.36) translate(-222 -585.8)">a</text>
<path d="M209.6 586.8 Q220.5 592.8 232 587.8" fill="none" stroke="#dcc98e" stroke-width="1.8" stroke-linecap="round"/>
</svg>
<div class="a" style="left:211px;top:626.82px;font-size:12.5px;letter-spacing:0.311px;color:#3a3f45">Total applications <b style="color:#2a2f35">4<span style="margin-left:-0.9px;letter-spacing:-1.1px">1</span>5</b></div>
<div class="a" style="left:684.4px;top:627.24px;font-size:12px;letter-spacing:0.265px;color:#3a3f45">Page <b><span style="margin-left:-0.9px;letter-spacing:-1.1px">1</span></b> out of 9</div>
<div class="a" style="left:1189px;top:627.24px;font-size:12px;letter-spacing:0.303px;color:#2f353b">Next</div>
<svg class="ico" style="left:1000px;top:130px" width="300" height="520" viewBox="1000 130 300 520">
<path d="M1069.6 148 L1071.8 145 L1074 148 Z M1069.6 150.6 L1071.8 153.6 L1074 150.6 Z" fill="#6f7479"/>
<path d="M1204.8 148 L1206.8 145 L1208.8 148 Z M1204.8 150.6 L1206.8 153.6 L1208.8 150.6 Z" fill="#6f7479"/>
<path d="M1228 630 L1231.4 633.6 L1228 637.2" fill="none" stroke="#6c7176" stroke-width="1.2"/>
</svg>
<div class="a" style="left:1270px;top:181px;width:6px;height:430px;background:#d3d6d9;border-radius:3px"></div>
<div class="a" style="left:1270px;top:181px;width:6px;height:78px;background:#7b4fd8;border-radius:3px"></div>
<div class="a" style="left:142px;top:648px;width:1158px;height:39px;background:linear-gradient(rgba(30,40,50,0) 0%,rgba(30,40,50,0.015) 40%,rgba(30,40,50,0.05) 52%,rgba(30,40,50,0.1) 100%)"></div>
<div class="a" style="left:1252px;top:631px;width:42px;height:42px;border-radius:50%;background:#8a4ff4"></div>
<svg class="ico" style="left:1250px;top:629px" width="48" height="48" viewBox="1250 629 48 48">
<path d="M1264.6 641.4 H1281.4 Q1281.8 641.4 1281.8 641.8 V662.2 L1278.6 659.8 Q1272 657.6 1264.4 661.2 Q1263.8 661.4 1263.8 660.8 V642.2 Q1263.8 641.4 1264.6 641.4 Z" fill="#ffffff"/>
<path d="M1266.8 654.8 Q1273 658.2 1279.4 654.8" fill="none" stroke="#4d3f70" stroke-width="1.3" stroke-linecap="round"/>
</svg></body></html>
